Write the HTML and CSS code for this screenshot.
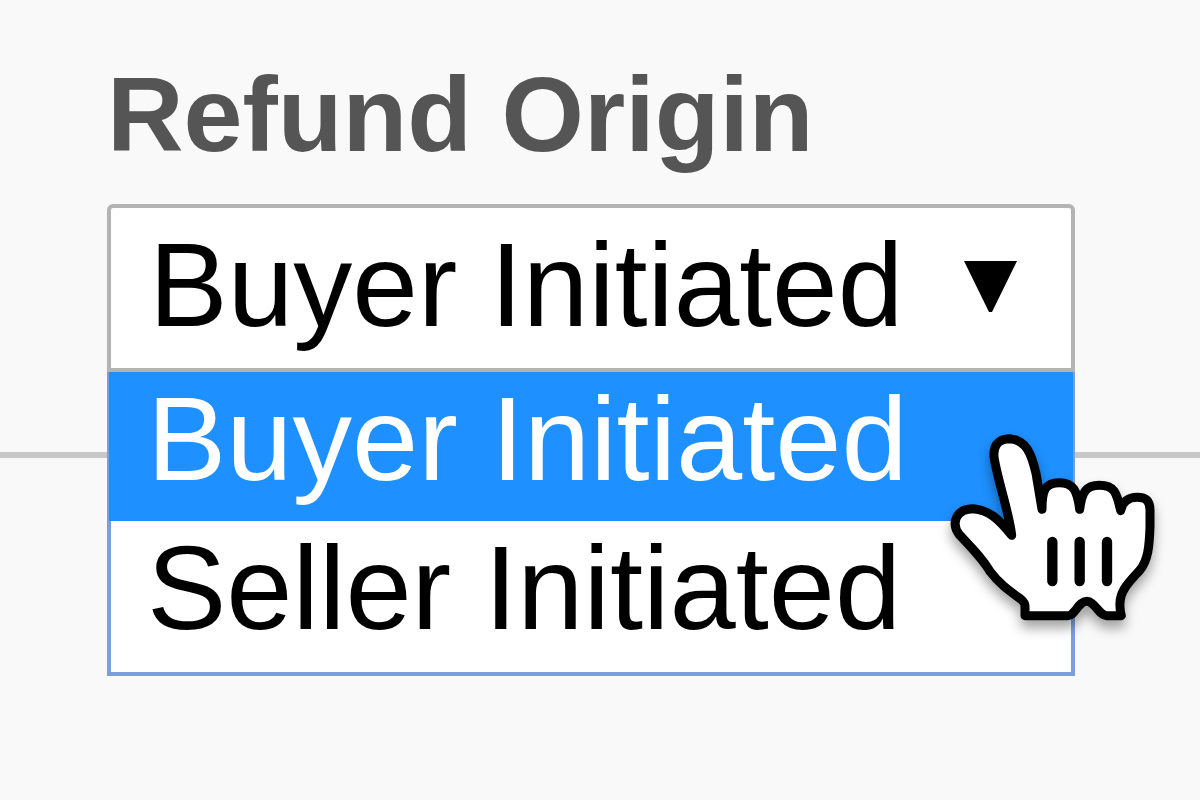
FILE: index.html
```html
<!DOCTYPE html>
<html lang="en">
<head>
    <meta charset="UTF-8">
    <meta name="viewport" content="width=device-width, initial-scale=1.0">
    <title>Refund Origin</title>
    <link rel="stylesheet" href="styles.css">
</head>
<body>
    <main class="panel">
        <section class="filter">
            <label class="filter-label" for="refund-origin">Refund Origin</label>
            <div class="dropdown">
                <select id="refund-origin" class="dropdown-select">
                    <option value="buyer" selected>Buyer Initiated</option>
                    <option value="seller">Seller Initiated</option>
                </select>
                <svg class="dropdown-arrow" viewBox="0 0 54 52" aria-hidden="true">
                    <path d="M1 0H54L29 51H26Z" />
                </svg>

                <!-- Open menu -->
                <ul class="menu" role="listbox" aria-label="Refund Origin">
                    <li class="menu-item active" role="option" aria-selected="true">Buyer Initiated</li>
                    <li class="menu-item" role="option" aria-selected="false">Seller Initiated</li>
                </ul>

                <!-- Hand pointer -->
                <svg class="pointer" viewBox="0 0 750 720" aria-hidden="true">
                    <path class="pointer-hand" d="M285 617V590Q285 577 272 567C235 540 205 518 180 484C158 447 133 422 88 374C62 340 78 296 130 296C176 300 206 326 245 376C238 310 206 222 193 148C187 110 202 86 240 86C290 90 305 135 318 190L336 298C336 240 346 218 388 218C430 218 442 242 449 298C456 246 468 226 508 226C552 226 560 246 572 302C576 278 592 262 622 262C650 262 660 276 660 300V350C658 410 654 450 630 480C600 514 570 540 570 580Q569 600 574 617H530C508 617 494 574 470 574C446 574 434 617 414 617Z" />
                    <path class="pointer-lines" d="M367 396V513M449 396V513M531 396V513" />
                </svg>
            </div>
        </section>
    </main>
</body>
</html>
```
FILE: styles.css
```css
* {
    box-sizing: border-box;
}
body {
    margin: 0;
    font-family: Arial, "Liberation Sans", sans-serif;
    background-color: #f9f9f9;
    overflow-x: hidden;
}
.panel {
    min-height: 676px;
}
.filter {
    padding: 54px 125px 80px 107px;
    border-bottom: 6px solid #c8c8c8;
}
.filter-label {
    display: block;
    margin-bottom: 30px;
    font-size: 106px;
    line-height: 120px;
    font-weight: bold;
    color: #555;
}
.dropdown {
    position: relative;
}
.dropdown-select {
    display: block;
    width: 100%;
    height: 168px;
    margin: 0;
    padding: 0 38px 6px;
    appearance: none;
    border: 4px solid #b4b4b4;
    border-radius: 6px 6px 0 0;
    background-color: white;
    color: black;
    font-family: inherit;
    font-size: 118px;
    outline: none;
}
.dropdown-arrow {
    position: absolute;
    top: 57px;
    right: 58px;
    width: 54px;
    height: 52px;
    pointer-events: none;
}
.menu {
    position: absolute;
    top: 100%;
    left: 0;
    width: 100%;
    margin: 0;
    padding: 0 0 2px;
    list-style: none;
    background-color: white;
    border: 4px solid #7c9fdb;
    border-top: none;
}
.menu-item {
    padding: 0 36px 15px;
    font-size: 119px;
    line-height: 134px;
    white-space: nowrap;
}
.menu-item.active {
    margin: 0 -2px;
    padding: 0 38px 15px;
    background-color: #1e90ff;
    color: white;
}
.pointer {
    position: absolute;
    top: 206px;
    right: -105px;
    width: 250px;
    height: 240px;
    pointer-events: none;
    filter: drop-shadow(0 8px 6px rgba(0,0,0,0.35));
}
.pointer-hand {
    fill: white;
    stroke: black;
    stroke-width: 27;
    stroke-linejoin: round;
}
.pointer-lines {
    fill: none;
    stroke: black;
    stroke-width: 31;
    stroke-linecap: round;
}
```
